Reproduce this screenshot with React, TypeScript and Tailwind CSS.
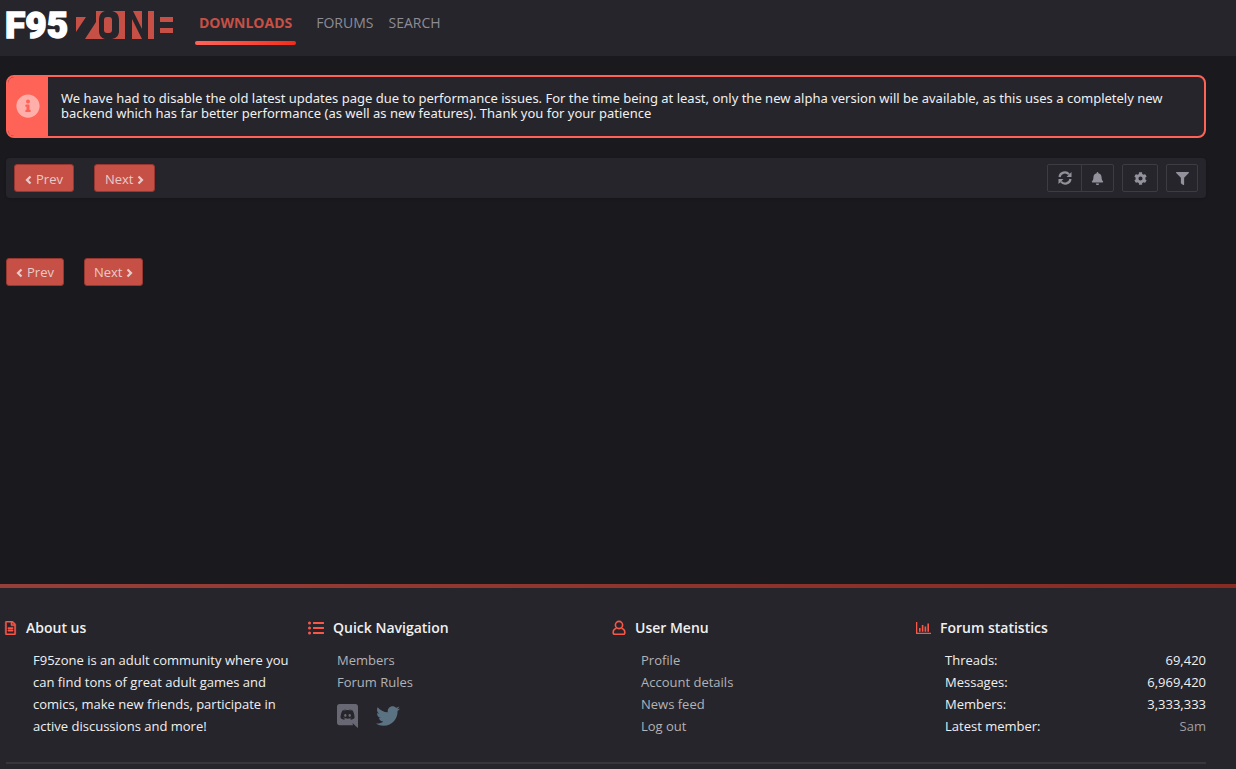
import type { ReactNode } from 'react'
import { FaBell, FaCog, FaFilter, FaInfoCircle, FaListUl, FaRegFileAlt, FaTwitter } from 'react-icons/fa'

const ICON = 'text-[#f95849]'

const userLinks = ['Profile', 'Account details', 'News feed', 'Log out']
const stats = [
  { label: 'Threads:', value: '69,420' },
  { label: 'Messages:', value: '6,969,420' },
  { label: 'Members:', value: '3,333,333' },
]

function Logo() {
  return (
    <a href="#" aria-label="F95zone" className="block h-12 w-[174px]">
      <svg viewBox="0 0 174 48" className="h-12 w-[174px]">
        <text x="5" y="38" fill="#fff" stroke="#fff" strokeWidth="1.4" fontFamily="Roboto, sans-serif" fontWeight="900" fontSize="37">F95</text>
        {/* blocks around and inside the dark letters */}
        <g fill="#c65046">
          <path d="M76 17H86L76 32Z" />
          <path d="M96 11H105C101 12 99 15 99 20V31C99 35 101 38 105 39H85L96 22Z" />
          <rect x="104" y="17" width="8" height="16" rx="3" />
          <path d="M112 11H125V39H112C117 38 119 35 119 31V20C119 15 117 12 112 11Z" />
          <path d="M133 11H142V29Z" />
          <path d="M132 39V19L142 39Z" />
          <rect x="148" y="11" width="6" height="28" />
          <rect x="160" y="17" width="13" height="5" />
          <rect x="160" y="28" width="13" height="5" />
        </g>
      </svg>
    </a>
  )
}

function Chevron({ d }: { d: string }) {
  return (
    <svg viewBox="0 0 7 10" className="h-2.5 w-[7px]" fill="none" stroke="currentColor" strokeWidth="2.2">
      <path d={d} />
    </svg>
  )
}

function Pager({ compact = false }: { compact?: boolean }) {
  const pad = compact ? 'px-[9px] pt-px' : 'px-[10px] pt-[3px]'
  const button = `flex h-7 items-center gap-1 rounded-[3px] border border-[#97372f] bg-[#c65046] text-[13px] text-[#e7cbc9] ${pad}`
  return (
    <div className="flex gap-5">
      <button className={button}>
        <Chevron d="M5.5 1.5L2 5L5.5 8.5" /> Prev
      </button>
      <button className={button}>
        Next <Chevron d="M1.5 1.5L5 5L1.5 8.5" />
      </button>
    </div>
  )
}

function ToolButton({ label, className, children }: { label: string; className: string; children: ReactNode }) {
  return (
    <button aria-label={label} className={`flex h-7 items-center justify-center border border-[#3d3c43] text-[#93929c] ${className}`}>
      {children}
    </button>
  )
}

function RefreshIcon() {
  return (
    <svg viewBox="0 0 14 14" className="size-3.5" fill="none" stroke="currentColor" strokeWidth="2.2">
      <path d="M1.5 6A5.4 5.4 0 0 1 11 3.4" />
      <path d="M12.5 8A5.4 5.4 0 0 1 3 10.6" />
      <path d="M13.5 1V6H8.5ZM.5 13V8H5.5Z" fill="currentColor" stroke="none" />
    </svg>
  )
}

function UserIcon() {
  return (
    <svg viewBox="0 0 14 16" className={`h-4 w-3.5 ${ICON}`} fill="none" stroke="currentColor" strokeWidth="1.6">
      <circle cx="7" cy="5" r="3.6" />
      <path d="M4.6 8.3C2.4 8.8 1.2 10.5 1.2 12.4C1.2 13.7 1.8 14.2 2.8 14.2H11.2C12.2 14.2 12.8 13.7 12.8 12.4C12.8 10.5 11.6 8.8 9.4 8.3" />
    </svg>
  )
}

function ChartIcon() {
  return (
    <svg viewBox="0 0 15 12" className={`h-3 w-[15px] ${ICON}`} fill="currentColor">
      <path d="M0 0H1.3V10.7H15V12H0ZM3 6H4.6V9.7H3ZM5.8 3H7.4V9.7H5.8ZM8.6 4.5H10.2V9.7H8.6ZM11.4 1.5H13V9.7H11.4Z" />
    </svg>
  )
}

function DiscordIcon() {
  return (
    <svg viewBox="0 0 448 512" className="h-6 w-[21px] text-[#686874]" fill="currentColor">
      <path d="M297.216 243.2c0 15.616-11.52 28.416-26.112 28.416-14.336 0-26.112-12.8-26.112-28.416s11.52-28.416 26.112-28.416c14.592 0 26.112 12.8 26.112 28.416zm-119.552-28.416c-14.592 0-26.112 12.8-26.112 28.416s11.776 28.416 26.112 28.416c14.592 0 26.112-12.8 26.112-28.416.256-15.616-11.52-28.416-26.112-28.416zM448 52.736V512c-64.494-56.994-43.868-38.128-118.784-107.776l13.568 47.36H52.48C23.552 451.584 0 428.032 0 398.848V52.736C0 23.552 23.552 0 52.48 0h343.04C424.448 0 448 23.552 448 52.736zm-72.96 242.688c0-82.432-36.864-149.248-36.864-149.248-36.864-27.648-71.936-26.88-71.936-26.88l-3.584 4.096c43.52 13.312 63.744 32.512 63.744 32.512-60.811-33.329-132.244-33.335-191.232-7.424-9.472 4.352-15.104 7.424-15.104 7.424s21.248-20.224 67.328-33.536l-2.56-3.072s-35.072-.768-71.936 26.88c0 0-36.864 66.816-36.864 149.248 0 0 21.504 37.12 78.08 38.912 0 0 9.472-11.52 17.152-21.248-32.512-9.728-44.8-30.208-44.8-30.208 3.766 2.636 9.976 6.053 10.496 6.4 43.21 24.198 104.588 32.126 159.744 8.96 8.96-3.328 18.944-8.192 29.44-15.104 0 0-12.8 20.992-46.336 30.464 7.68 9.728 16.896 20.736 16.896 20.736 56.576-1.792 78.336-38.912 78.336-38.912z" />
    </svg>
  )
}

function FooterBlock({ icon, title, children }: { icon: ReactNode; title: string; children: ReactNode }) {
  return (
    <section className="min-w-0 flex-1">
      <h3 className="flex h-6 items-center gap-[9px] text-sm font-semibold text-[#f0f0f1]">
        {icon}
        {title}
      </h3>
      <div className="mt-[9px] pl-[29px] text-[13px] leading-[22px]">{children}</div>
    </section>
  )
}

export default function App() {
  return (
    <div className="flex min-h-screen flex-col bg-[#1a191e] font-['Open_Sans',sans-serif] text-[#f0f0f1]">
      <header className="flex h-14 items-start bg-[#26252b]">
        <Logo />
        <nav className="ml-[21px] flex h-[45px] text-sm leading-[46px] text-[#8d8c95]">
          <a href="#" className="relative px-1 font-bold text-[#c65046]">
            DOWNLOADS
            <span className="absolute inset-x-0 bottom-0 h-1 rounded-full bg-linear-to-r from-[#ff6358] to-[#f32b18]" />
          </a>
          <a href="#" className="ml-5">FORUMS</a>
          <a href="#" className="ml-[15px]">SEARCH</a>
        </nav>
      </header>

      <main className="mr-[30px] ml-1.5 flex-1 pt-[19px]">
        <div className="flex h-[63px] overflow-hidden rounded-lg border-2 border-[#ff6358] bg-[#26252b]">
          <div className="flex w-10 shrink-0 items-center justify-center bg-[#ff6358] pr-px pb-0.5">
            <FaInfoCircle className="size-6 text-[#ffaea9]" />
          </div>
          <p className="px-[13px] pt-[14px] font-['Noto_Sans',sans-serif] text-[13px] leading-[15px]">
            We have had to disable the old latest updates page due to performance issues. For the time being at least, only the new alpha version will be available, as this uses a completely new backend which has far better performance (as well as new features). Thank you for your patience
          </p>
        </div>

        <div className="mt-5 flex h-10 items-center justify-between rounded-sm bg-[#26252b] px-2 shadow-sm">
          <Pager />
          <div className="flex">
            <ToolButton label="Refresh" className="w-[35px] rounded-l-xs"><RefreshIcon /></ToolButton>
            <ToolButton label="Notifications" className="-ml-px w-[33px] rounded-r-xs"><FaBell className="size-[13px]" /></ToolButton>
            <ToolButton label="Settings" className="ml-2 w-9 rounded-xs"><FaCog className="size-[13px]" /></ToolButton>
            <ToolButton label="Filter" className="ml-2 w-8 rounded-xs"><FaFilter className="size-[13px]" /></ToolButton>
          </div>
        </div>

        <div className="mt-[60px]">
          <Pager compact />
        </div>
      </main>

      <footer className="bg-[#26252b]">
        <div className="h-1 bg-linear-to-r from-[#963f38] to-[#872b23]" />
        <div className="mr-[30px] ml-1 flex gap-3.5 pt-7">
          <FooterBlock icon={<FaRegFileAlt className={`h-3.5 w-[13px] ${ICON}`} stroke="currentColor" strokeWidth="16" />} title="About us">
            <p className="max-w-[264px]">
              F95zone is an adult community where you can find tons of great adult games and comics, make new friends, participate in active discussions and more!
            </p>
          </FooterBlock>
          <FooterBlock icon={<FaListUl className={`size-4 ${ICON}`} />} title="Quick Navigation">
            <ul className="text-[#b3b2b6]">
              <li><a href="#">Members</a></li>
              <li><a href="#">Forum Rules</a></li>
            </ul>
            <div className="mt-[11px] flex gap-[18px]">
              <a href="#" aria-label="Discord"><DiscordIcon /></a>
              <a href="#" aria-label="Twitter"><FaTwitter className="size-6 text-[#5b7282]" /></a>
            </div>
          </FooterBlock>
          <FooterBlock icon={<UserIcon />} title="User Menu">
            <ul className="text-[#b3b2b6]">
              {userLinks.map((l) => (
                <li key={l}><a href="#">{l}</a></li>
              ))}
            </ul>
          </FooterBlock>
          <FooterBlock icon={<ChartIcon />} title="Forum statistics">
            <dl>
              {stats.map((s) => (
                <div key={s.label} className="flex justify-between">
                  <dt>{s.label}</dt>
                  <dd>{s.value}</dd>
                </div>
              ))}
              <div className="flex justify-between">
                <dt>Latest member:</dt>
                <dd><a href="#" className="text-[#a09fa5]">Sam</a></dd>
              </div>
            </dl>
          </FooterBlock>
        </div>
        <div className="mt-[25px] mr-[30px] ml-1.5 h-[7px] border-t-2 border-[#37363c]" />
      </footer>
    </div>
  )
}
